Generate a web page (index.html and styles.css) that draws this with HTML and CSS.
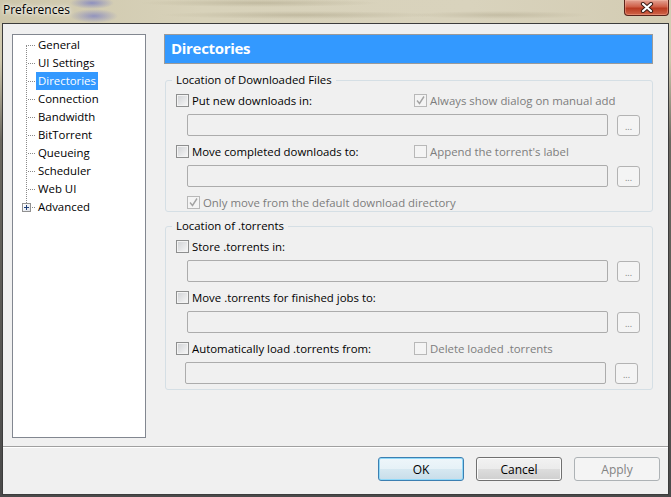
FILE: index.html
```html
<!DOCTYPE html>
<html lang="en">
<head>
    <meta charset="UTF-8">
    <title>Preferences</title>
    <link rel="stylesheet" href="styles.css">
</head>
<body>
    <div class="titlebar">
        <span class="title">Preferences</span>
        <span class="close">
            <svg width="14" height="11" viewBox="0 0 14 11">
                <path d="M3 2 L11 9 M11 2 L3 9" stroke="#3b1c16" stroke-width="4.2" stroke-linecap="round"/>
                <path d="M3 2 L11 9 M11 2 L3 9" stroke="#fff" stroke-width="2.2" stroke-linecap="round"/>
            </svg>
        </span>
    </div>

    <div class="client">
        <div class="main">
            <ul class="tree">
                <li><span>General</span></li>
                <li><span>UI Settings</span></li>
                <li class="sel"><span>Directories</span></li>
                <li><span>Connection</span></li>
                <li><span>Bandwidth</span></li>
                <li><span>BitTorrent</span></li>
                <li><span>Queueing</span></li>
                <li><span>Scheduler</span></li>
                <li><span>Web UI</span></li>
                <li class="parent"><i class="plus"></i><span>Advanced</span></li>
            </ul>

            <div class="pane">
                <div class="header">Directories</div>

                <fieldset class="group">
                    <legend>Location of Downloaded Files</legend>
                    <div class="row">
                        <label class="check"><span class="box"></span>Put new downloads in:</label>
                        <label class="check off"><span class="box ticked"></span>Always show dialog on manual add</label>
                    </div>
                    <div class="path"><span class="field"></span><span class="browse">...</span></div>
                    <div class="row">
                        <label class="check"><span class="box"></span>Move completed downloads to:</label>
                        <label class="check off"><span class="box"></span>Append the torrent's label</label>
                    </div>
                    <div class="path"><span class="field"></span><span class="browse">...</span></div>
                    <div class="row indent">
                        <label class="check off"><span class="box ticked"></span>Only move from the default download directory</label>
                    </div>
                </fieldset>

                <fieldset class="group second">
                    <legend>Location of .torrents</legend>
                    <div class="row">
                        <label class="check"><span class="box"></span>Store .torrents in:</label>
                    </div>
                    <div class="path"><span class="field"></span><span class="browse">...</span></div>
                    <div class="row">
                        <label class="check"><span class="box"></span>Move .torrents for finished jobs to:</label>
                    </div>
                    <div class="path"><span class="field"></span><span class="browse">...</span></div>
                    <div class="row">
                        <label class="check"><span class="box"></span>Automatically load .torrents from:</label>
                        <label class="check off"><span class="box"></span>Delete loaded .torrents</label>
                    </div>
                    <div class="path shift"><span class="field"></span><span class="browse">...</span></div>
                </fieldset>
            </div>
        </div>

        <div class="footer">
            <button class="btn default">OK</button>
            <button class="btn">Cancel</button>
            <button class="btn" disabled>Apply</button>
        </div>
    </div>
</body>
</html>
```

FILE: styles.css
```css
body {
    margin: 0;
    width: 671px;
    height: 497px;
    overflow: hidden;
    font-family: "Open Sans", "Noto Sans", sans-serif;
    font-size: 11.4px;
    color: #000;
    background: linear-gradient(#d6d0b7 0, #cfc8ad 60px, #6b6860 140px, #4a4a4a 100%);
}

/* title bar over blurred glass */
.titlebar {
    height: 23px;
    display: flex;
    justify-content: space-between;
    align-items: flex-start;
    background:
        radial-gradient(ellipse 22px 6px at 92px 3px, rgba(112, 118, 196, .7), transparent),
        radial-gradient(ellipse 24px 7px at 94px 16px, rgba(112, 118, 196, .65), transparent),
        radial-gradient(ellipse 120px 4px at 260px 3px, rgba(150, 140, 110, .35), transparent),
        radial-gradient(ellipse 140px 4px at 300px 15px, rgba(150, 140, 110, .35), transparent),
        radial-gradient(ellipse 90px 4px at 500px 15px, rgba(150, 140, 110, .3), transparent),
        linear-gradient(90deg, #cdc6aa, #d8d2ba 30%, #d9d3bd 70%, #d3ccb3);
}
.title {
    margin: 2px 0 0 3px;
    font-size: 12px;
    line-height: 16px;
    text-shadow: 0 0 6px #fff, 0 0 3px #fff;
}
.close {
    width: 45px;
    height: 16px;
    margin-right: 2px;
    box-sizing: border-box;
    border: 1px solid #5a231a;
    border-top: none;
    border-radius: 0 0 4px 4px;
    background: linear-gradient(#e3a293, #cf5f48 45%, #b93a21 55%, #d0664a);
    box-shadow: inset 0 0 0 1px rgba(255, 200, 180, .35);
    display: flex;
    justify-content: center;
    align-items: center;
}

.client {
    margin: 0 2px;
    height: 472px;
    box-sizing: border-box;
    border: 1px solid #3c3c3c;
    background: #f0f0f0;
    display: flex;
    flex-direction: column;
}
.main {
    height: 422px;
    display: flex;
    padding: 10px 15px 0 9px;
    box-sizing: border-box;
}

/* tree */
.tree {
    position: relative;
    width: 134px;
    height: 404px;
    box-sizing: border-box;
    margin: 0;
    padding: 1px 0 0 0;
    list-style: none;
    border: 1px solid #828790;
    background: #fff;
}
.tree::before {
    content: "";
    position: absolute;
    left: 13px;
    top: 10px;
    height: 158px;
    border-left: 1px dotted #8a8a8a;
}
.tree li {
    position: relative;
    height: 18px;
    line-height: 18px;
    padding-left: 23px;
    font-size: 12px;
}
.tree li::before {
    content: "";
    position: absolute;
    left: 15px;
    top: 9px;
    width: 7px;
    border-top: 1px dotted #8a8a8a;
}
.tree li span {
    display: inline-block;
    padding: 0 2px;
    font-size: 11.4px;
}
.tree li.sel span {
    background: #3399ff;
    color: #fff;
}
.plus {
    position: absolute;
    left: 9px;
    top: 5px;
    width: 9px;
    height: 9px;
    box-sizing: border-box;
    border: 1px solid #919191;
    background: linear-gradient(135deg, #fff, #dfe3ea);
    z-index: 1;
}
.plus::before,
.plus::after {
    content: "";
    position: absolute;
    background: #1f3f77;
}
.plus::before { left: 1px; top: 3px; width: 5px; height: 1px; }
.plus::after { left: 3px; top: 1px; width: 1px; height: 5px; }

/* right pane */
.pane {
    flex: 1;
    margin-left: 18px;
}
.header {
    height: 30px;
    box-sizing: border-box;
    border: 1px solid #9a9a9a;
    background: #3399ff;
    color: #fff;
    font-weight: bold;
    font-size: 15px;
    letter-spacing: -0.3px;
    line-height: 27px;
    padding-left: 6px;
}
.group {
    margin: 8px 0 0 1px;
    padding: 0 12px 0 10px;
    border: 1px solid #d5dfe5;
    border-radius: 3px;
}
.group.second {
    margin-top: 6px;
    padding-bottom: 5px;
}
.group legend {
    padding: 0 4px;
    margin-left: -4px;
    line-height: 16px;
}
.row {
    display: grid;
    grid-template-columns: 238px auto;
    height: 18px;
    align-items: center;
    margin-top: 6px;
}
legend + .row {
    margin-top: 3px;
}
.row.indent {
    grid-template-columns: auto;
    padding-left: 11px;
}
.check {
    display: flex;
    align-items: center;
    gap: 3px;
    white-space: nowrap;
}
.check.off {
    color: #7d7d7d;
}
.box {
    flex-shrink: 0;
    width: 13px;
    height: 13px;
    box-sizing: border-box;
    border: 1px solid #8e8f8f;
    background: linear-gradient(135deg, #cfd1d4, #f8f8f8);
    box-shadow: inset 0 0 0 1px #f3f3f3;
}
.off .box {
    border-color: #b8b8b8;
    background: #f4f4f4;
    box-shadow: none;
}
.box.ticked {
    background: #f4f4f4 url("data:image/svg+xml,%3Csvg xmlns='http://www.w3.org/2000/svg' width='11' height='11'%3E%3Cpath d='M2 5.5 L4.5 8.5 L9 1.5' fill='none' stroke='%23a3a3a3' stroke-width='1.4'/%3E%3C/svg%3E") center / 11px 11px no-repeat;
}
.path {
    display: flex;
    gap: 9px;
    margin-top: 5px;
    padding-left: 11px;
}
.path.shift {
    padding-left: 9px;
}
.field {
    width: 421px;
    height: 22px;
    box-sizing: border-box;
    border: 1px solid #acacac;
    border-radius: 2px;
    background: #f0f0f0;
}
.browse {
    width: 23px;
    height: 21px;
    margin-top: 1px;
    box-sizing: border-box;
    border: 1px solid #b3b3b3;
    border-radius: 3px;
    background: #f4f4f4;
    color: #808080;
    font-size: 9px;
    line-height: 22px;
    text-align: center;
}

/* buttons */
.footer {
    flex: 1;
    display: flex;
    justify-content: flex-end;
    align-items: flex-start;
    gap: 12px;
    padding: 10px 8px 0 0;
    border-top: 1px solid #a0a0a0;
    box-shadow: inset 0 1px #fff;
}
.btn {
    width: 86px;
    height: 24px;
    padding: 0;
    font-family: inherit;
    font-size: 12px;
    color: #000;
    border: 1px solid #707070;
    border-radius: 3px;
    background: linear-gradient(#f2f2f2, #ebebeb 50%, #dddddd 50%, #cfcfcf);
    box-shadow: inset 0 0 0 1px #fbfbfb;
}
.btn.default {
    border-color: #3c7fb1;
    box-shadow: inset 0 0 0 1px #8fd8f8;
    background: linear-gradient(#eef6fa, #e6f1f7 50%, #d6e8f1 50%, #c8dde9);
}
.btn:disabled {
    border-color: #adb2b5;
    background: #f4f4f4;
    box-shadow: none;
    color: #838383;
}
```
